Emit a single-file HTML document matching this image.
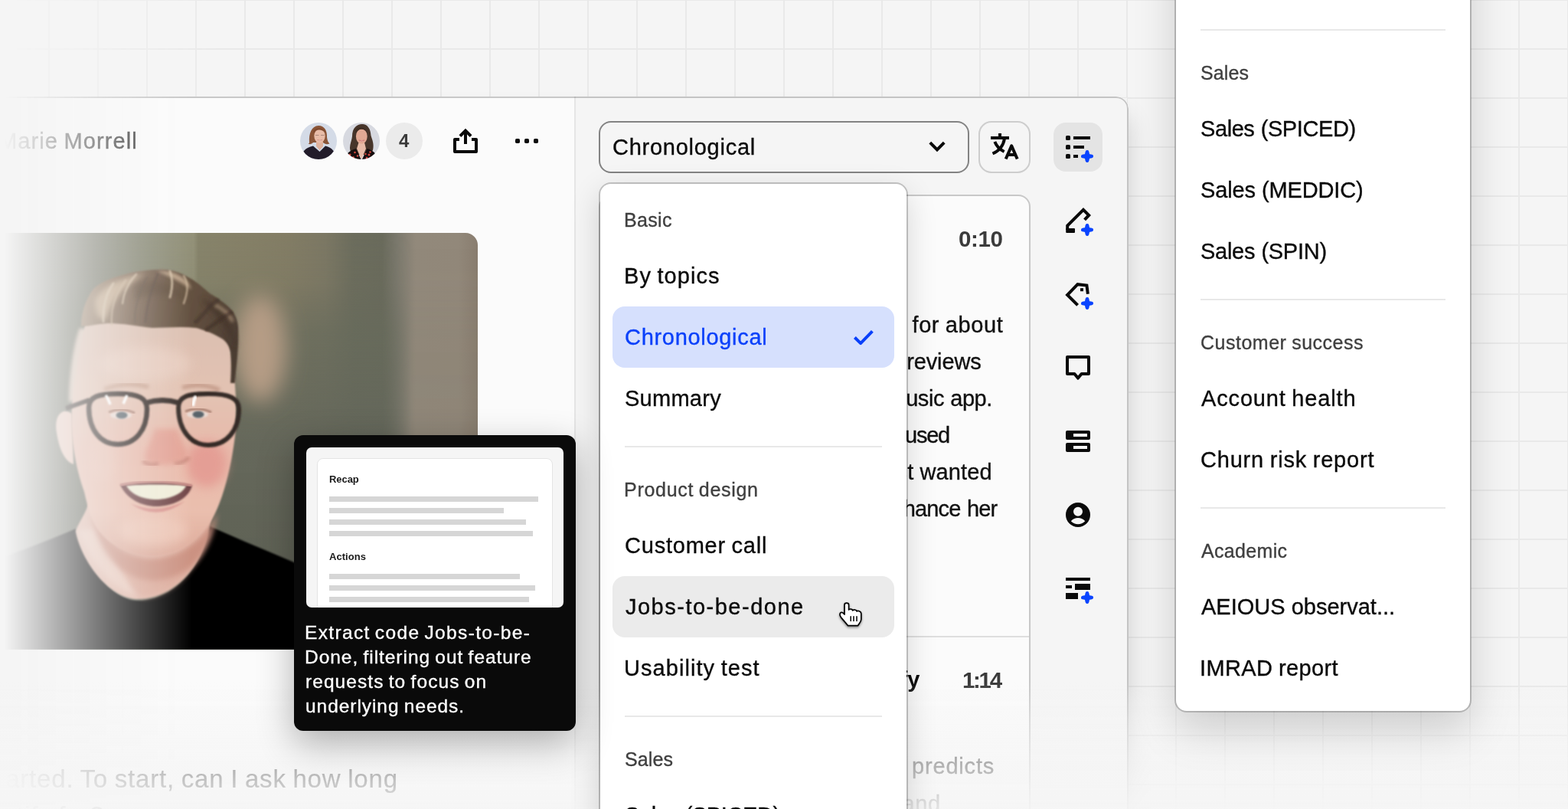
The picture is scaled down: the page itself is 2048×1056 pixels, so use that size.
<!DOCTYPE html>
<html lang="en"><head><meta charset="utf-8"><title>Templates dropdown</title>
<style>
*{box-sizing:border-box;margin:0;padding:0}
html,body{width:2048px;height:1056px;overflow:hidden}
body{position:relative;background:#f5f5f5;font-family:"Liberation Sans",sans-serif;-webkit-font-smoothing:antialiased}
.a{position:absolute}
.t{position:absolute;white-space:nowrap;line-height:1;will-change:transform;-webkit-text-stroke:.35px currentColor}
.grid{position:absolute;left:0;top:0;width:2048px;height:1056px;
 background-image:linear-gradient(to right,#e9e9e9 2px,transparent 2px),linear-gradient(to bottom,#e9e9e9 2px,transparent 2px);
 background-size:64px 64px;background-position:-1px -1px;-webkit-mask-image:linear-gradient(to right,transparent 16px,#000 288px);mask-image:linear-gradient(to right,transparent 16px,#000 288px)}
.panel{position:absolute;left:0;top:126px;width:1474px;height:960px;border-radius:0 16px 0 0;overflow:hidden;background:#fbfbfb;-webkit-mask-image:linear-gradient(to right,transparent 6px,#000 250px);mask-image:linear-gradient(to right,transparent 6px,#000 250px)}
.pshadow{position:absolute;left:300px;top:126px;width:1174px;height:960px;border-radius:0 16px 0 0;box-shadow:0 24px 32px rgba(0,0,0,.16)}
.pin{position:absolute;left:0;top:-126px;width:2048px;height:1056px}
.rpane{position:absolute;left:750px;top:126px;width:724px;height:960px;background:#f5f5f5;border-left:2px solid #e6e6e6}
.pborder{position:absolute;left:-4px;top:126px;width:1478px;height:980px;border:2px solid rgba(0,0,0,.2);border-radius:0 16px 0 0}
.bfade{position:absolute;left:0;top:890px;width:2048px;height:166px;background:linear-gradient(to bottom,rgba(245,245,245,0) 0,rgba(245,245,245,.4) 30%,rgba(245,245,245,.68) 62%,rgba(245,245,245,.88) 92%,rgba(245,245,245,.92) 100%)}
.sel{position:absolute;left:782px;top:158px;width:484px;height:68px;border:2px solid #838383;border-radius:16px}
.tbtn{position:absolute;left:1278px;top:158px;width:68px;height:68px;border:2px solid #cdcdcd;border-radius:17px}
.ibtn{position:absolute;left:1376px;top:160px;width:64px;height:64px;border-radius:16px;background:#e4e4e4}
.card{position:absolute;left:782px;top:254px;width:564px;height:900px;border:2px solid rgba(0,0,0,.2);border-radius:16px;background:#fbfbfb}
.csep{position:absolute;left:784px;top:830px;width:560px;height:2px;background:#dedede}
.popup{position:absolute;left:784px;top:240px;width:400px;height:900px;background:#fff;border-radius:14px;
 box-shadow:0 0 0 2px rgba(0,0,0,.2),0 12px 40px rgba(0,0,0,.16)}
.rpopup{position:absolute;left:1536px;top:-200px;width:384px;height:1128px;background:#fff;border-radius:14px;
 box-shadow:0 0 0 2px rgba(0,0,0,.2),0 24px 56px rgba(0,0,0,.17)}
.row{position:absolute;left:800px;width:368px;height:80px;border-radius:16px}
.dv{position:absolute;height:2px;background:#e8e8e8}
.tip{position:absolute;left:384px;top:568px;width:368px;height:386px;border-radius:12px;background:#0a0a0a;box-shadow:0 16px 48px rgba(0,0,0,.3)}
.prev{position:absolute;left:400px;top:584px;width:336px;height:209px;border-radius:7px;background:#f5f5f5;overflow:hidden}
.pcard{position:absolute;left:14px;top:14px;width:308px;height:230px;border:1px solid #e4e4e4;border-radius:8px;background:#fff}
.bar{position:absolute;left:430px;height:7px;background:#d6d6d6}
.av{position:absolute;top:160px;width:48px;height:48px;border-radius:50%;overflow:hidden}
</style></head>
<body>
<div class="grid"></div>
<div class="a" style="left:0;top:128px;width:1472px;height:928px;background:#f5f5f5"></div>
<div class="pshadow"></div>
<div class="panel"><div class="pin">
  <div class="rpane"></div>
  <div class="t" style="left:-1.76px;top:170.05px;font-size:29px;letter-spacing:1.096px;word-spacing:-1.645px;color:#2b2b2b;">Marie Morrell</div>
  <svg class="a" style="left:392px;top:160px" width="104" height="48" viewBox="0 0 104 48">
<defs><clipPath id="c1"><circle cx="24" cy="24" r="24"/></clipPath><clipPath id="c2"><circle cx="80" cy="24" r="24"/></clipPath>
<filter id="ab" x="-20%" y="-20%" width="140%" height="140%"><feGaussianBlur stdDeviation=".55"/></filter></defs>
<g clip-path="url(#c1)"><rect width="48" height="48" fill="#d4dbe7"/>
<g filter="url(#ab)">
<path d="M12 26C11 14 15 4.500 24 4C32 4 35.500 11 35 19C35.500 23 36.500 26 38.500 27.500C35 29 32 28 30 26H17C15 28 13 29 10.500 27.500C12 27 12 26.500 12 26Z" fill="#8a5437"/>
<path d="M21 25H30V31L25.500 36L21 31Z" fill="#dfb19c"/>
<ellipse cx="25.500" cy="17.500" rx="7.200" ry="9.300" fill="#e8bca8"/>
<path d="M18 14C20 9 27 7 33.500 13.500C31 6 21 5 17 11Z" fill="#7f4a2e"/>
<path d="M22.500 22.500Q25.500 25 29 22.500Q25.500 23.600 22.500 22.500Z" fill="#fff" stroke="#c9807a" stroke-width=".5"/>
<path d="M20 16.500h4.500M27 16.500h4.500" stroke="#8b6b62" stroke-width=".9" opacity=".7"/>
<path d="M1 48C2 38 7 32.500 17 30.500L25.500 38L33 30.500C42 32.500 46 38 47 48Z" fill="#211d29"/>
</g></g>
<g clip-path="url(#c2)"><rect x="56" width="48" height="48" fill="#d7d9e0"/>
<g filter="url(#ab)">
<path d="M68 18C68 7 74 2 81 2C88 2 92 8 92.500 17C94 22 97 28 95 36C93 40 90 42 87 42H72C68 41 65 38 65 33C65 28 67.500 23 68 18Z" fill="#47342a"/>
<path d="M76.500 26H84L86 34L80 48L74 34Z" fill="#e8bba7"/>
<ellipse cx="80.300" cy="18" rx="7.400" ry="9.800" fill="#e2a993"/>
<path d="M73 14C75 8 84 6 88 14C86 5 76 4 72 10Z" fill="#3f2d24"/>
<path d="M76.800 23Q80.300 26 84 23Q80.300 24.200 76.800 23Z" fill="#fff" stroke="#c6605c" stroke-width=".6"/>
<path d="M59 48C60 41 64 36.500 73 34L79.500 48ZM101 48C100 41 96 36.500 87.500 34L81 48Z" fill="#17100f"/>
<g fill="#d4443c"><circle cx="65" cy="42" r="1.500"/><circle cx="69.500" cy="45.500" r="1.500"/><circle cx="71.500" cy="39" r="1.300"/><circle cx="75" cy="43.500" r="1.200"/><circle cx="66" cy="46.500" r="1.200"/>
<circle cx="90" cy="42" r="1.500"/><circle cx="94.500" cy="45" r="1.500"/><circle cx="87" cy="46" r="1.300"/><circle cx="91.500" cy="38.500" r="1.300"/><circle cx="85.500" cy="41" r="1.200"/></g>
</g></g>
</svg>

  <div class="a" style="left:504px;top:160px;width:48px;height:48px;border-radius:50%;background:#ebebeb"></div>
  <div class="t" style="left:520.80px;top:171.58px;font-size:24px;letter-spacing:0.000px;word-spacing:-0.000px;color:#3a3a3a;font-weight:700;-webkit-text-stroke:0;">4</div>
  <svg class="a" style="left:0;top:304px" width="624" height="544" viewBox="0 304 624 544">
<defs>
<clipPath id="pc"><rect x="-40" y="304" width="664" height="544" rx="16"/></clipPath>
<linearGradient id="pbg" gradientUnits="userSpaceOnUse" x1="0" y1="0" x2="624" y2="0">
<stop offset="0" stop-color="#74756c"/><stop offset=".2" stop-color="#78796b"/><stop offset=".3" stop-color="#848570"/><stop offset=".405" stop-color="#949279"/><stop offset=".415" stop-color="#87846b"/><stop offset=".5" stop-color="#868168"/>
<stop offset=".6" stop-color="#837d65"/><stop offset=".68" stop-color="#7c7864"/><stop offset=".74" stop-color="#6c6d5d"/><stop offset=".8" stop-color="#6a6b5c"/>
<stop offset=".83" stop-color="#7a786c"/><stop offset=".87" stop-color="#92897b"/><stop offset=".96" stop-color="#92887a"/><stop offset="1" stop-color="#897d6f"/>
</linearGradient>
<linearGradient id="pv" gradientUnits="userSpaceOnUse" x1="0" y1="304" x2="0" y2="848">
<stop offset="0" stop-color="#646759" stop-opacity="0"/><stop offset=".12" stop-color="#646759" stop-opacity=".08"/><stop offset=".24" stop-color="#666a5b" stop-opacity=".68"/><stop offset=".5" stop-color="#63665a" stop-opacity=".92"/><stop offset="1" stop-color="#585b50" stop-opacity=".97"/>
</linearGradient>
<linearGradient id="pvm" gradientUnits="userSpaceOnUse" x1="0" y1="0" x2="624" y2="0">
<stop offset="0" stop-color="#fff"/><stop offset=".8" stop-color="#fff"/><stop offset=".86" stop-color="#fff" stop-opacity=".08"/><stop offset="1" stop-color="#fff" stop-opacity=".08"/>
</linearGradient>
<mask id="pvk" maskUnits="userSpaceOnUse" x="-40" y="304" width="664" height="544"><rect x="-40" y="304" width="664" height="544" fill="url(#pvm)"/></mask>
<linearGradient id="skin" gradientUnits="userSpaceOnUse" x1="0" y1="430" x2="0" y2="725">
<stop offset="0" stop-color="#dcc0b1"/><stop offset=".3" stop-color="#e3c2b2"/><stop offset=".55" stop-color="#e8b9aa"/><stop offset=".8" stop-color="#eabfae"/><stop offset="1" stop-color="#ddab9b"/>
</linearGradient>
<linearGradient id="hair" gradientUnits="userSpaceOnUse" x1="110" y1="380" x2="310" y2="440">
<stop offset="0" stop-color="#a08870"/><stop offset=".2" stop-color="#846c57"/><stop offset=".45" stop-color="#6a5544"/><stop offset=".7" stop-color="#62503f"/><stop offset="1" stop-color="#4c3d33"/>
</linearGradient>
<filter id="f1" x="-10%" y="-10%" width="120%" height="120%"><feGaussianBlur stdDeviation="1.3"/></filter>
<filter id="f2" x="-20%" y="-20%" width="140%" height="140%"><feGaussianBlur stdDeviation="2.2"/></filter>
<filter id="f3" x="-20%" y="-20%" width="140%" height="140%"><feGaussianBlur stdDeviation="3.500"/></filter>
<filter id="f6" x="-30%" y="-30%" width="160%" height="160%"><feGaussianBlur stdDeviation="7"/></filter>
<filter id="f14" x="-50%" y="-50%" width="200%" height="200%"><feGaussianBlur stdDeviation="14"/></filter>
</defs>
<g clip-path="url(#pc)">
<rect x="-40" y="304" width="664" height="544" fill="url(#pbg)"/>
<rect x="-40" y="304" width="664" height="544" fill="url(#pv)" mask="url(#pvk)"/>
<ellipse cx="340" cy="455" rx="34" ry="70" fill="#b59c85" filter="url(#f14)"/>
<!-- shirt -->
<path d="M-40 848V742C10 726 62 706 99 690C110 732 142 781 178 784C222 784 262 748 274 687C312 704 352 720 384 734C430 752 480 778 520 806L560 848Z" fill="#030303" filter="url(#f1)"/>
<!-- neck -->
<path d="M118 650C112 672 101 684 99 694C106 732 142 780 178 782C224 782 262 745 273 690L288 630Z" fill="#e2b8a9" filter="url(#f1)"/>
<path d="M102 692C120 740 150 770 178 778C160 740 140 712 125 690Z" fill="#ecccbf" opacity=".8" filter="url(#f3)"/>
<path d="M150 722C180 740 240 735 275 690C262 740 225 780 185 780C170 765 158 745 150 722Z" fill="#dba797" opacity=".8" filter="url(#f3)"/>
<path d="M118 670C140 712 170 728 200 729C232 728 264 710 284 668C276 726 244 756 200 758C160 756 130 726 118 670Z" fill="#c98e7e" opacity=".85" filter="url(#f3)"/>
<!-- ear -->
<path d="M94 540C80 530 70 545 74 565C77 585 84 602 96 606Z" fill="#ecc8ba" filter="url(#f1)"/>
<!-- side hair left -->
<path d="M104 428C96 450 90 490 90 525L112 520C112 490 116 455 124 432Z" fill="#d8c3b4" filter="url(#f2)"/>
<!-- face -->
<path d="M112 420C100 470 93 520 93 556C95 590 102 620 110 642C114 660 119 678 127 690C143 712 168 725 200 726C232 725 262 706 280 672C294 644 304 600 308 560C310 520 306 480 298 440C270 410 150 410 112 420Z" fill="url(#skin)" filter="url(#f1)"/>
<ellipse cx="270" cy="606" rx="26" ry="30" fill="#e3958e" opacity=".75" filter="url(#f6)"/>
<ellipse cx="135" cy="600" rx="18" ry="30" fill="#eccbbd" opacity=".35" filter="url(#f6)"/>
<ellipse cx="200" cy="692" rx="46" ry="20" fill="#efc9b9" opacity=".8" filter="url(#f6)"/>
<ellipse cx="190" cy="475" rx="60" ry="22" fill="#e9cfc1" opacity=".7" filter="url(#f6)"/>
<!-- nose -->
<path d="M202 560C196 580 186 592 190 602C200 610 236 608 244 598C246 590 236 575 232 560Z" fill="#e29d90" opacity=".8" filter="url(#f3)"/>
<path d="M186 602Q196 609 207 605" stroke="#b9766a" stroke-width="3.500" fill="none" opacity=".8" filter="url(#f2)"/>
<path d="M228 605Q240 605 247 597" stroke="#b9766a" stroke-width="3.500" fill="none" opacity=".75" filter="url(#f2)"/>
<!-- hair -->
<path d="M106 426C106 410 110 394 122 377C134 366 150 362 160 359C175 354 200 351 216 352C228 353 238 357 246 362C258 368 266 376 274 383C286 390 294 396 300 402C306 408 310 416 311 426C312 446 310 470 308 486L307 500L301 500C302 484 302 470 301 459C299 450 294 444 288 441C276 434 264 430 256 428C236 426 216 428 199 428C180 426 160 422 142 422C130 422 118 426 106 426Z" fill="url(#hair)" filter="url(#f1)"/>
<path d="M124 392C134 372 160 362 190 357C170 368 150 384 138 416C130 420 124 410 124 392Z" fill="#cdb497" opacity=".85" filter="url(#f3)"/>
<path d="M205 354C225 352 246 362 250 378C240 370 226 362 205 354Z" fill="#cbb194" opacity=".85" filter="url(#f2)"/>
<path d="M175 372C200 360 230 372 245 392C225 384 200 380 175 392Z" fill="#5c4839" opacity=".6" filter="url(#f3)"/>
<path d="M262 390C285 396 306 420 309 455C300 432 282 410 262 390Z" fill="#45362c" opacity=".8" filter="url(#f3)"/>
<path d="M280 398C290 402 300 410 304 420" stroke="#b79d82" stroke-width="4" fill="none" opacity=".7" filter="url(#f2)"/>
<g fill="none" stroke-linecap="round" filter="url(#f1)">
<path d="M135 420C134 400 138 384 148 370" stroke="#d6c2a8" stroke-width="3" opacity=".75"/>
<path d="M146 424C144 402 150 384 164 366" stroke="#cdb79c" stroke-width="2.500" opacity=".6"/>
<path d="M160 396C162 380 168 368 178 358" stroke="#d9c5ab" stroke-width="2.500" opacity=".7"/>
<path d="M222 388C226 374 226 364 222 354" stroke="#dcc8ad" stroke-width="3" opacity=".75"/>
<path d="M240 396C246 380 246 370 240 360" stroke="#d2bca0" stroke-width="2.500" opacity=".7"/>
<path d="M190 420C192 396 198 376 206 358" stroke="#55443a" stroke-width="4" opacity=".45"/>
<path d="M176 420C176 398 182 380 192 362" stroke="#5a483c" stroke-width="3" opacity=".4"/>
<path d="M256 420C268 408 276 398 284 392" stroke="#3f3229" stroke-width="5" opacity=".5"/>
<path d="M270 430C284 420 294 412 302 408" stroke="#3b2e26" stroke-width="5" opacity=".5"/>
</g>
<!-- brows -->
<path d="M136 508Q165 497 194 505" stroke="#c7a08d" stroke-width="5" fill="none" filter="url(#f2)"/>
<path d="M238 506Q262 498 287 509" stroke="#c39a88" stroke-width="5" fill="none" filter="url(#f2)"/>
<!-- eyes -->
<ellipse cx="158" cy="542" rx="14" ry="5" fill="#e9d9d2" filter="url(#f1)"/>
<ellipse cx="258" cy="541" rx="14" ry="5" fill="#e9d9d2" filter="url(#f1)"/>
<ellipse cx="159" cy="542" rx="7.500" ry="4.500" fill="#59646a" filter="url(#f1)"/>
<ellipse cx="259" cy="541" rx="7.500" ry="4.500" fill="#59646a" filter="url(#f1)"/>
<path d="M142 538Q158 531 176 539" stroke="#a3796b" stroke-width="2.500" fill="none" filter="url(#f1)"/>
<path d="M242 537Q258 530 276 538" stroke="#a3796b" stroke-width="2.500" fill="none" filter="url(#f1)"/>
<!-- glasses -->
<g fill="none" stroke="#352a25" filter="url(#f1)">
<path d="M116 532C116 518 128 514 154 514C182 514 192 520 192 534C192 562 176 580 154 580C132 580 116 562 116 532Z" stroke-width="6.500"/>
<path d="M233 532C233 518 244 514 272 514C300 514 312 520 312 534C312 562 296 581 272 581C250 581 233 562 233 532Z" stroke-width="6"/>
<path d="M190 526Q212 519 234 526" stroke-width="7"/>
<path d="M117 522L86 533" stroke-width="6"/>
</g>
<path d="M138 516Q141 520 144 528M166 516Q164 520 161 527" stroke="#fff" stroke-width="3.500" fill="none" filter="url(#f1)"/>
<path d="M256 517Q253 521 252 530" stroke="#fff" stroke-width="4" fill="none" filter="url(#f1)"/>
<!-- mouth -->
<path d="M157 633C180 628 230 628 251 634C246 652 224 661 204 661C186 661 166 652 157 633Z" fill="#6f4546" filter="url(#f1)"/>
<path d="M165 634C186 632 226 632 243 634C238 646 218 652 204 652C190 652 172 647 165 634Z" fill="#f0edd8" filter="url(#f1)"/>
<path d="M170 657Q205 672 242 654Q205 682 170 657Z" fill="#d9958f" filter="url(#f1)"/>
<path d="M157 633Q204 624 251 634" stroke="#c98c86" stroke-width="3" fill="none" filter="url(#f1)"/>
</g>
</svg>

  <div class="t" style="left:-252.66px;top:1000.07px;font-size:33px;letter-spacing:0.810px;word-spacing:-1.215px;color:#0a0a0a;-webkit-text-stroke:.2px currentColor;">Great, let's get started. To start, can I ask how long</div>
<div class="t" style="left:-364.11px;top:1048.07px;font-size:33px;letter-spacing:0.800px;word-spacing:-1.200px;color:#0a0a0a;-webkit-text-stroke:.2px currentColor;">you have been using Spotify for?</div>
  <div class="sel"></div>
  <div class="t" style="left:799.75px;top:177.75px;font-size:29px;letter-spacing:0.739px;word-spacing:-1.108px;color:#0a0a0a;">Chronological</div>
  <div class="tbtn"></div>
  <div class="ibtn"></div>
  <div class="card"></div>
  <div class="csep"></div>
  <div class="t" style="left:1252.20px;top:297.23px;font-size:29.5px;letter-spacing:-0.412px;word-spacing:0.618px;color:#3b3b3b;font-weight:700;-webkit-text-stroke:0;">0:10</div>
<div class="t" style="left:847.30px;top:409.75px;font-size:29px;letter-spacing:0.583px;word-spacing:-0.874px;color:#111;">I have been using Spotify for about</div>
<div class="t" style="left:789.72px;top:457.75px;font-size:29px;letter-spacing:-0.117px;word-spacing:0.175px;color:#111;">three years now and I love the reviews</div>
<div class="t" style="left:849.78px;top:505.75px;font-size:29px;letter-spacing:-0.464px;word-spacing:0.695px;color:#111;">that people leave on the music app.</div>
<div class="t" style="left:846.59px;top:553.75px;font-size:29px;letter-spacing:-1.252px;word-spacing:1.878px;color:#111;">My partner has always also used</div>
<div class="t" style="left:863.61px;top:601.75px;font-size:29px;letter-spacing:0.123px;word-spacing:-0.184px;color:#111;">Spotify, but lately she just wanted</div>
<div class="t" style="left:876.16px;top:649.75px;font-size:29px;letter-spacing:-0.820px;word-spacing:1.229px;color:#111;">some new features to enhance her</div>
<div class="t" style="left:1103.26px;top:873.45px;font-size:29px;letter-spacing:0.000px;word-spacing:-0.000px;color:#0a0a0a;font-weight:700;-webkit-text-stroke:0;">Spotify</div>
<div class="t" style="left:1257.30px;top:873.03px;font-size:29.5px;letter-spacing:-2.312px;word-spacing:3.468px;color:#3b3b3b;font-weight:700;-webkit-text-stroke:0;">1:14</div>
<div class="t" style="left:916.64px;top:985.75px;font-size:29px;letter-spacing:0.808px;word-spacing:-1.212px;color:#111;">I think the algorithm predicts</div>
<div class="t" style="left:917.96px;top:1035.05px;font-size:29px;letter-spacing:0.600px;word-spacing:-0.900px;color:#111;">what I want to hear and</div>
  <svg class="a" style="left:0;top:0" width="2048" height="1056" viewBox="0 0 2048 1056">
<g fill="none" stroke="#0a0a0a" stroke-width="4">
<!-- share -->
<path d="M600 182H594V198H622V182H616" stroke-linejoin="round"/>
<path d="M608 188V171"/>
<path d="M600.9 177.6L608 170.5L615.1 177.6" stroke-linejoin="miter"/>
<!-- chevron -->
<path d="M1214.8 186.2L1224 195.4L1233.2 186.2"/>
<!-- translate -->
<path d="M1294 180H1318M1306 174V180"/>
<path d="M1312 181C1310.5 190 1306 196.5 1296.5 200.5"/>
<path d="M1299.3 185C1301.5 190.5 1305.5 195 1311.6 198"/>
<path d="M1313.700 207.500L1321.200 190.400L1328.700 207.500M1316.500 202H1326" stroke-linejoin="round"/>
<!-- pencil -->
<path d="M1394.2 300V294.6L1415 273.8L1422.2 281L1416.6 286.8" stroke-linejoin="miter"/>
<!-- tag -->
<path d="M1407.6 398.4L1394.1 385L1407.5 371.2L1419.4 372.6L1420.9 383.7" stroke-linejoin="miter"/>
<!-- comment -->
<path d="M1394 466H1422V488H1412.6L1408 493.6L1403.4 488H1394Z" stroke-linejoin="round"/>
</g>
<g fill="#0a0a0a">
<!-- dots -->
<rect x="673" y="181" width="6" height="6" rx="1.8"/><rect x="685" y="181" width="6" height="6" rx="1.8"/><rect x="697" y="181" width="6" height="6" rx="1.8"/>
<!-- list icon -->
<rect x="1392" y="177" width="6" height="6" rx="1.6"/><rect x="1392" y="189" width="6" height="6" rx="1.6"/><rect x="1392" y="201" width="6" height="6" rx="1.6"/>
<rect x="1402" y="178" width="22" height="4"/><rect x="1402" y="190" width="14" height="4"/><rect x="1402" y="202" width="6" height="4"/>
<!-- pencil base -->
<rect x="1392.2" y="298" width="11.8" height="6" rx="1"/>
<!-- tag dot -->
<rect x="1411" y="376.2" width="4" height="4"/>
<!-- rows -->
<path fill-rule="evenodd" d="M1394 562H1422A2 2 0 0 1 1424 564V572A2 2 0 0 1 1422 574H1394A2 2 0 0 1 1392 572V564A2 2 0 0 1 1394 562ZM1402 566V570H1420V566Z"/>
<path fill-rule="evenodd" d="M1394 578H1422A2 2 0 0 1 1424 580V588A2 2 0 0 1 1422 590H1394A2 2 0 0 1 1392 588V580A2 2 0 0 1 1394 578ZM1402 582V586H1420V582Z"/>
<!-- user -->
<path fill-rule="evenodd" d="M1408 656A16 16 0 1 1 1408 688A16 16 0 1 1 1408 656ZM1408 661.8A6 6 0 1 0 1408 673.8A6 6 0 1 0 1408 661.8ZM1398.8 680.2C1404 674.6 1412 674.6 1417.3 680.2C1412 685.6 1404 685.6 1398.8 680.2Z"/>
<!-- layout -->
<rect x="1392" y="754" width="32" height="4"/><rect x="1392" y="764" width="8" height="4"/><rect x="1404" y="762" width="20" height="8"/><rect x="1392" y="774" width="16" height="8"/>
</g>
<path transform="translate(1420 204)" d="M0-5.600L1-1L5.600 0L1 1L0 5.600L-1 1L-5.600 0L-1-1Z" fill="#0a44ff" stroke="#0a44ff" stroke-width="4.8" stroke-linejoin="round"/>
<path transform="translate(1420 300)" d="M0-5.600L1-1L5.600 0L1 1L0 5.600L-1 1L-5.600 0L-1-1Z" fill="#0a44ff" stroke="#0a44ff" stroke-width="4.8" stroke-linejoin="round"/>
<path transform="translate(1420 396)" d="M0-5.600L1-1L5.600 0L1 1L0 5.600L-1 1L-5.600 0L-1-1Z" fill="#0a44ff" stroke="#0a44ff" stroke-width="4.8" stroke-linejoin="round"/>
<path transform="translate(1420 780)" d="M0-5.600L1-1L5.600 0L1 1L0 5.600L-1 1L-5.600 0L-1-1Z" fill="#0a44ff" stroke="#0a44ff" stroke-width="4.8" stroke-linejoin="round"/>
</svg>

  <div class="pborder"></div>
</div></div>
<div class="bfade"></div>
<div class="popup"></div>
<div class="row" style="top:400px;background:#d6e0fd"></div>
<div class="row" style="top:752px;background:#ebebeb"></div>
<div class="dv" style="left:816px;top:582px;width:336px"></div>
<div class="dv" style="left:816px;top:934px;width:336px"></div>
<div class="t" style="left:815.25px;top:275.09px;font-size:25px;letter-spacing:0.342px;word-spacing:-0.513px;color:#3f3f3f;">Basic</div>
<div class="t" style="left:815.25px;top:345.75px;font-size:29px;letter-spacing:1.053px;word-spacing:-1.579px;color:#0a0a0a;">By topics</div>
<div class="t" style="left:816.25px;top:425.75px;font-size:29px;letter-spacing:0.697px;word-spacing:-1.046px;color:#0a40fa;">Chronological</div>
<div class="t" style="left:815.90px;top:505.75px;font-size:29px;letter-spacing:0.271px;word-spacing:-0.407px;color:#0a0a0a;">Summary</div>
<div class="t" style="left:814.90px;top:627.14px;font-size:25px;letter-spacing:0.716px;word-spacing:-1.074px;color:#3f3f3f;">Product design</div>
<div class="t" style="left:815.90px;top:697.75px;font-size:29px;letter-spacing:0.778px;word-spacing:-1.167px;color:#0a0a0a;">Customer call</div>
<div class="t" style="left:816.90px;top:777.75px;font-size:29px;letter-spacing:1.496px;word-spacing:-2.244px;color:#0a0a0a;">Jobs-to-be-done</div>
<div class="t" style="left:814.90px;top:857.75px;font-size:29px;letter-spacing:1.067px;word-spacing:-1.601px;color:#0a0a0a;">Usability test</div>
<div class="t" style="left:816.20px;top:979.14px;font-size:25px;letter-spacing:0.141px;word-spacing:-0.211px;color:#3f3f3f;">Sales</div>
<div class="t" style="left:816.20px;top:1049.75px;font-size:29px;letter-spacing:-0.420px;word-spacing:0.630px;color:#0a0a0a;">Sales (SPICED)</div>
<div class="tip"></div>
<div class="prev"><div class="pcard"></div></div>
<div class="bar" style="top:648px;width:273px"></div>
<div class="bar" style="top:663px;width:228px"></div>
<div class="bar" style="top:678px;width:257px"></div>
<div class="bar" style="top:693px;width:266px"></div>
<div class="bar" style="top:749px;width:249px"></div>
<div class="bar" style="top:764px;width:269px"></div>
<div class="bar" style="top:779px;width:261px"></div>
<div class="t" style="left:398.40px;top:814.26px;font-size:24.5px;letter-spacing:1.353px;word-spacing:-2.030px;color:#ffffff;">Extract code Jobs-to-be-</div>
<div class="t" style="left:398.40px;top:846.26px;font-size:24.5px;letter-spacing:0.954px;word-spacing:-1.431px;color:#ffffff;">Done, filtering out feature</div>
<div class="t" style="left:399.40px;top:878.26px;font-size:24.5px;letter-spacing:1.062px;word-spacing:-1.592px;color:#ffffff;">requests to focus on</div>
<div class="t" style="left:399.40px;top:910.26px;font-size:24.5px;letter-spacing:0.944px;word-spacing:-1.416px;color:#ffffff;">underlying needs.</div>
<div class="t" style="left:430.40px;top:619.00px;font-size:13px;letter-spacing:-0.070px;word-spacing:0.104px;color:#1a1a1a;font-weight:700;-webkit-text-stroke:0;">Recap</div>
<div class="t" style="left:430.40px;top:719.60px;font-size:13px;letter-spacing:0.043px;word-spacing:-0.065px;color:#1a1a1a;font-weight:700;-webkit-text-stroke:0;">Actions</div>
<div class="rpopup"></div>
<div class="dv" style="left:1568px;top:38px;width:320px"></div>
<div class="dv" style="left:1568px;top:390px;width:320px"></div>
<div class="dv" style="left:1568px;top:662px;width:320px"></div>
<div class="t" style="left:1568.10px;top:83.14px;font-size:25px;letter-spacing:0.141px;word-spacing:-0.211px;color:#3f3f3f;">Sales</div>
<div class="t" style="left:1568.10px;top:153.75px;font-size:29px;letter-spacing:-0.420px;word-spacing:0.630px;color:#0a0a0a;">Sales (SPICED)</div>
<div class="t" style="left:1568.10px;top:233.75px;font-size:29px;letter-spacing:-0.143px;word-spacing:0.214px;color:#0a0a0a;">Sales (MEDDIC)</div>
<div class="t" style="left:1568.10px;top:313.75px;font-size:29px;letter-spacing:-0.268px;word-spacing:0.401px;color:#0a0a0a;">Sales (SPIN)</div>
<div class="t" style="left:1568.10px;top:435.14px;font-size:25px;letter-spacing:0.510px;word-spacing:-0.765px;color:#3f3f3f;">Customer success</div>
<div class="t" style="left:1569.10px;top:505.75px;font-size:29px;letter-spacing:0.850px;word-spacing:-1.275px;color:#0a0a0a;">Account health</div>
<div class="t" style="left:1568.10px;top:585.75px;font-size:29px;letter-spacing:0.808px;word-spacing:-1.212px;color:#0a0a0a;">Churn risk report</div>
<div class="t" style="left:1569.10px;top:707.14px;font-size:25px;letter-spacing:0.319px;word-spacing:-0.479px;color:#3f3f3f;">Academic</div>
<div class="t" style="left:1569.10px;top:777.75px;font-size:29px;letter-spacing:0.001px;word-spacing:-0.001px;color:#0a0a0a;">AEIOUS observat...</div>
<div class="t" style="left:1567.10px;top:857.75px;font-size:29px;letter-spacing:0.347px;word-spacing:-0.521px;color:#0a0a0a;">IMRAD report</div>
<svg class="a" style="left:0;top:0" width="2048" height="1056" viewBox="0 0 2048 1056">
<defs><filter id="cs" x="-50%" y="-50%" width="200%" height="200%"><feDropShadow dx="0" dy="1.6" stdDeviation="1.5" flood-color="#000" flood-opacity=".45"/></filter></defs>
<path d="M1116.400 440.500L1124.100 448.100L1139.400 432.400" fill="none" stroke="#0a40fa" stroke-width="4" stroke-linejoin="round"/>
<g filter="url(#cs)">
<path d="M1103 802V789.600C1103 786.400 1108.600 786.400 1108.600 789.600V796C1109.600 794.500 1113.500 794.600 1113.900 797C1114.600 795.400 1118.600 795.600 1119.100 798C1120.100 796.800 1124.700 797.500 1124.800 801V808.500C1124.800 811.600 1122 814 1120.600 816.700H1107.600C1105 813.500 1101 809 1098.300 805.600C1096.500 803.200 1096.600 800.600 1098.300 799.600C1099.800 798.800 1101.500 800 1103 802Z" fill="#fff" stroke="#000" stroke-width="1.700" stroke-linejoin="round"/>
<path d="M1111.200 804.800V810.600M1115 804.800V810.600M1119 804.800V810.600" stroke="#000" stroke-width="1.500" stroke-linecap="round" fill="none"/>
</g>
</svg>

</body></html>
